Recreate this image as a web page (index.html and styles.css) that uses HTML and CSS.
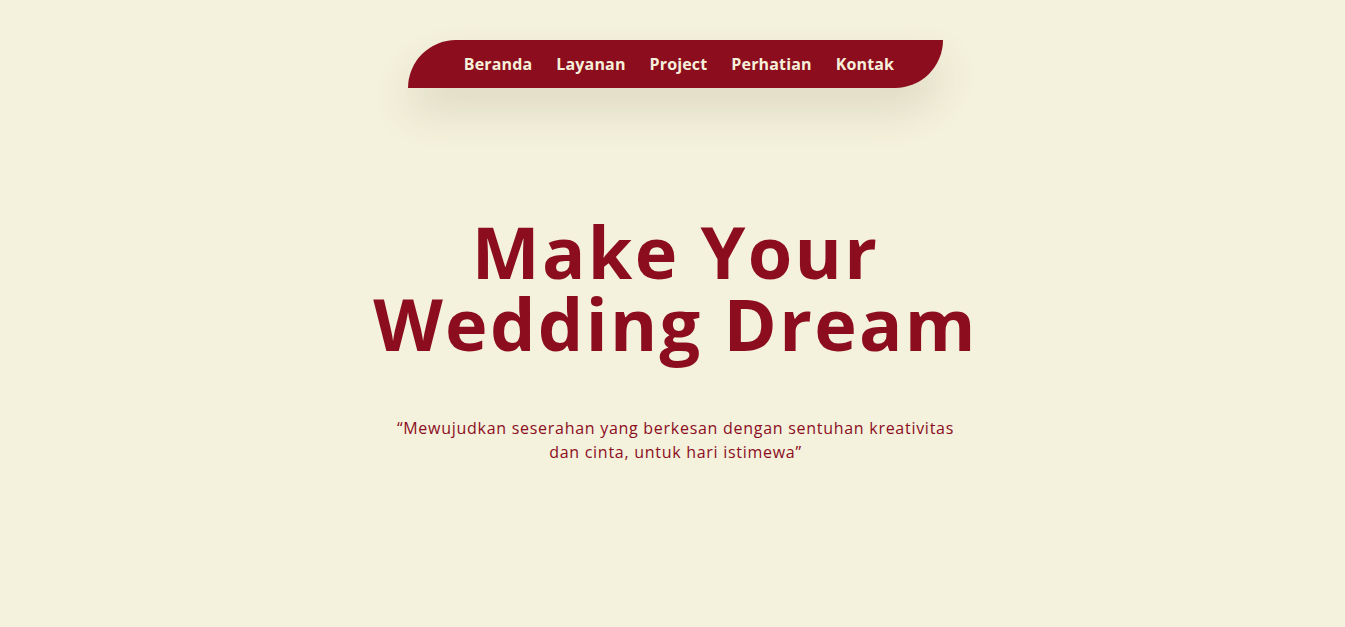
FILE: index.html
```html
<!DOCTYPE html>
<html lang="id">
<head>
<meta charset="utf-8">
<title>Make Your Wedding Dream</title>
<link rel="stylesheet" href="styles.css">
</head>
<body>
<div class="page">
  <header class="topbar">
    <nav class="nav">
      <a class="nav-link" href="#">Beranda</a>
      <a class="nav-link" href="#">Layanan</a>
      <a class="nav-link" href="#">Project</a>
      <a class="nav-link" href="#">Perhatian</a>
      <a class="nav-link" href="#">Kontak</a>
    </nav>
  </header>
  <main class="hero">
    <h1 class="hero-title">Make Your<br>Wedding Dream</h1>
    <p class="hero-quote">“Mewujudkan seserahan yang berkesan dengan sentuhan kreativitas dan cinta, untuk hari istimewa”</p>
  </main>
</div>
</body>
</html>
```
FILE: styles.css
```css
html, body {
  margin: 0;
  padding: 0;
}
body {
  background: #f4f1dc;
  font-family: "Open Sans", "Noto Sans", sans-serif;
  color: #8b0d1e;
  min-height: 627px;
}
.page {
  padding: 40px 0 0 6px;
  display: flex;
  flex-direction: column;
  align-items: center;
}
.topbar {
  display: flex;
  justify-content: center;
}
.nav {
  display: flex;
  align-items: center;
  gap: 24px;
  height: 48px;
  padding: 0 49px 0 56px;
  background: #8b0d1e;
  border-radius: 48px 0 48px 0;
  box-shadow: 0 22px 40px rgba(110, 100, 60, 0.16);
}
.nav-link {
  color: #f6f0db;
  text-decoration: none;
  font-size: 16px;
  font-weight: 700;
  letter-spacing: 0.15px;
  line-height: 1;
  padding-bottom: 1px;
}
.hero {
  display: flex;
  flex-direction: column;
  align-items: center;
  text-align: center;
  padding-top: 127px;
}
.hero-title {
  margin: 0;
  font-size: 72px;
  font-weight: 700;
  line-height: 72px;
  letter-spacing: 2.3px;
  color: #8b0d1e;
}
.hero-quote {
  margin: 57px 0 0;
  max-width: 575px;
  font-size: 16px;
  line-height: 24px;
  letter-spacing: 0.72px;
  color: #8b0d1e;
}
```
